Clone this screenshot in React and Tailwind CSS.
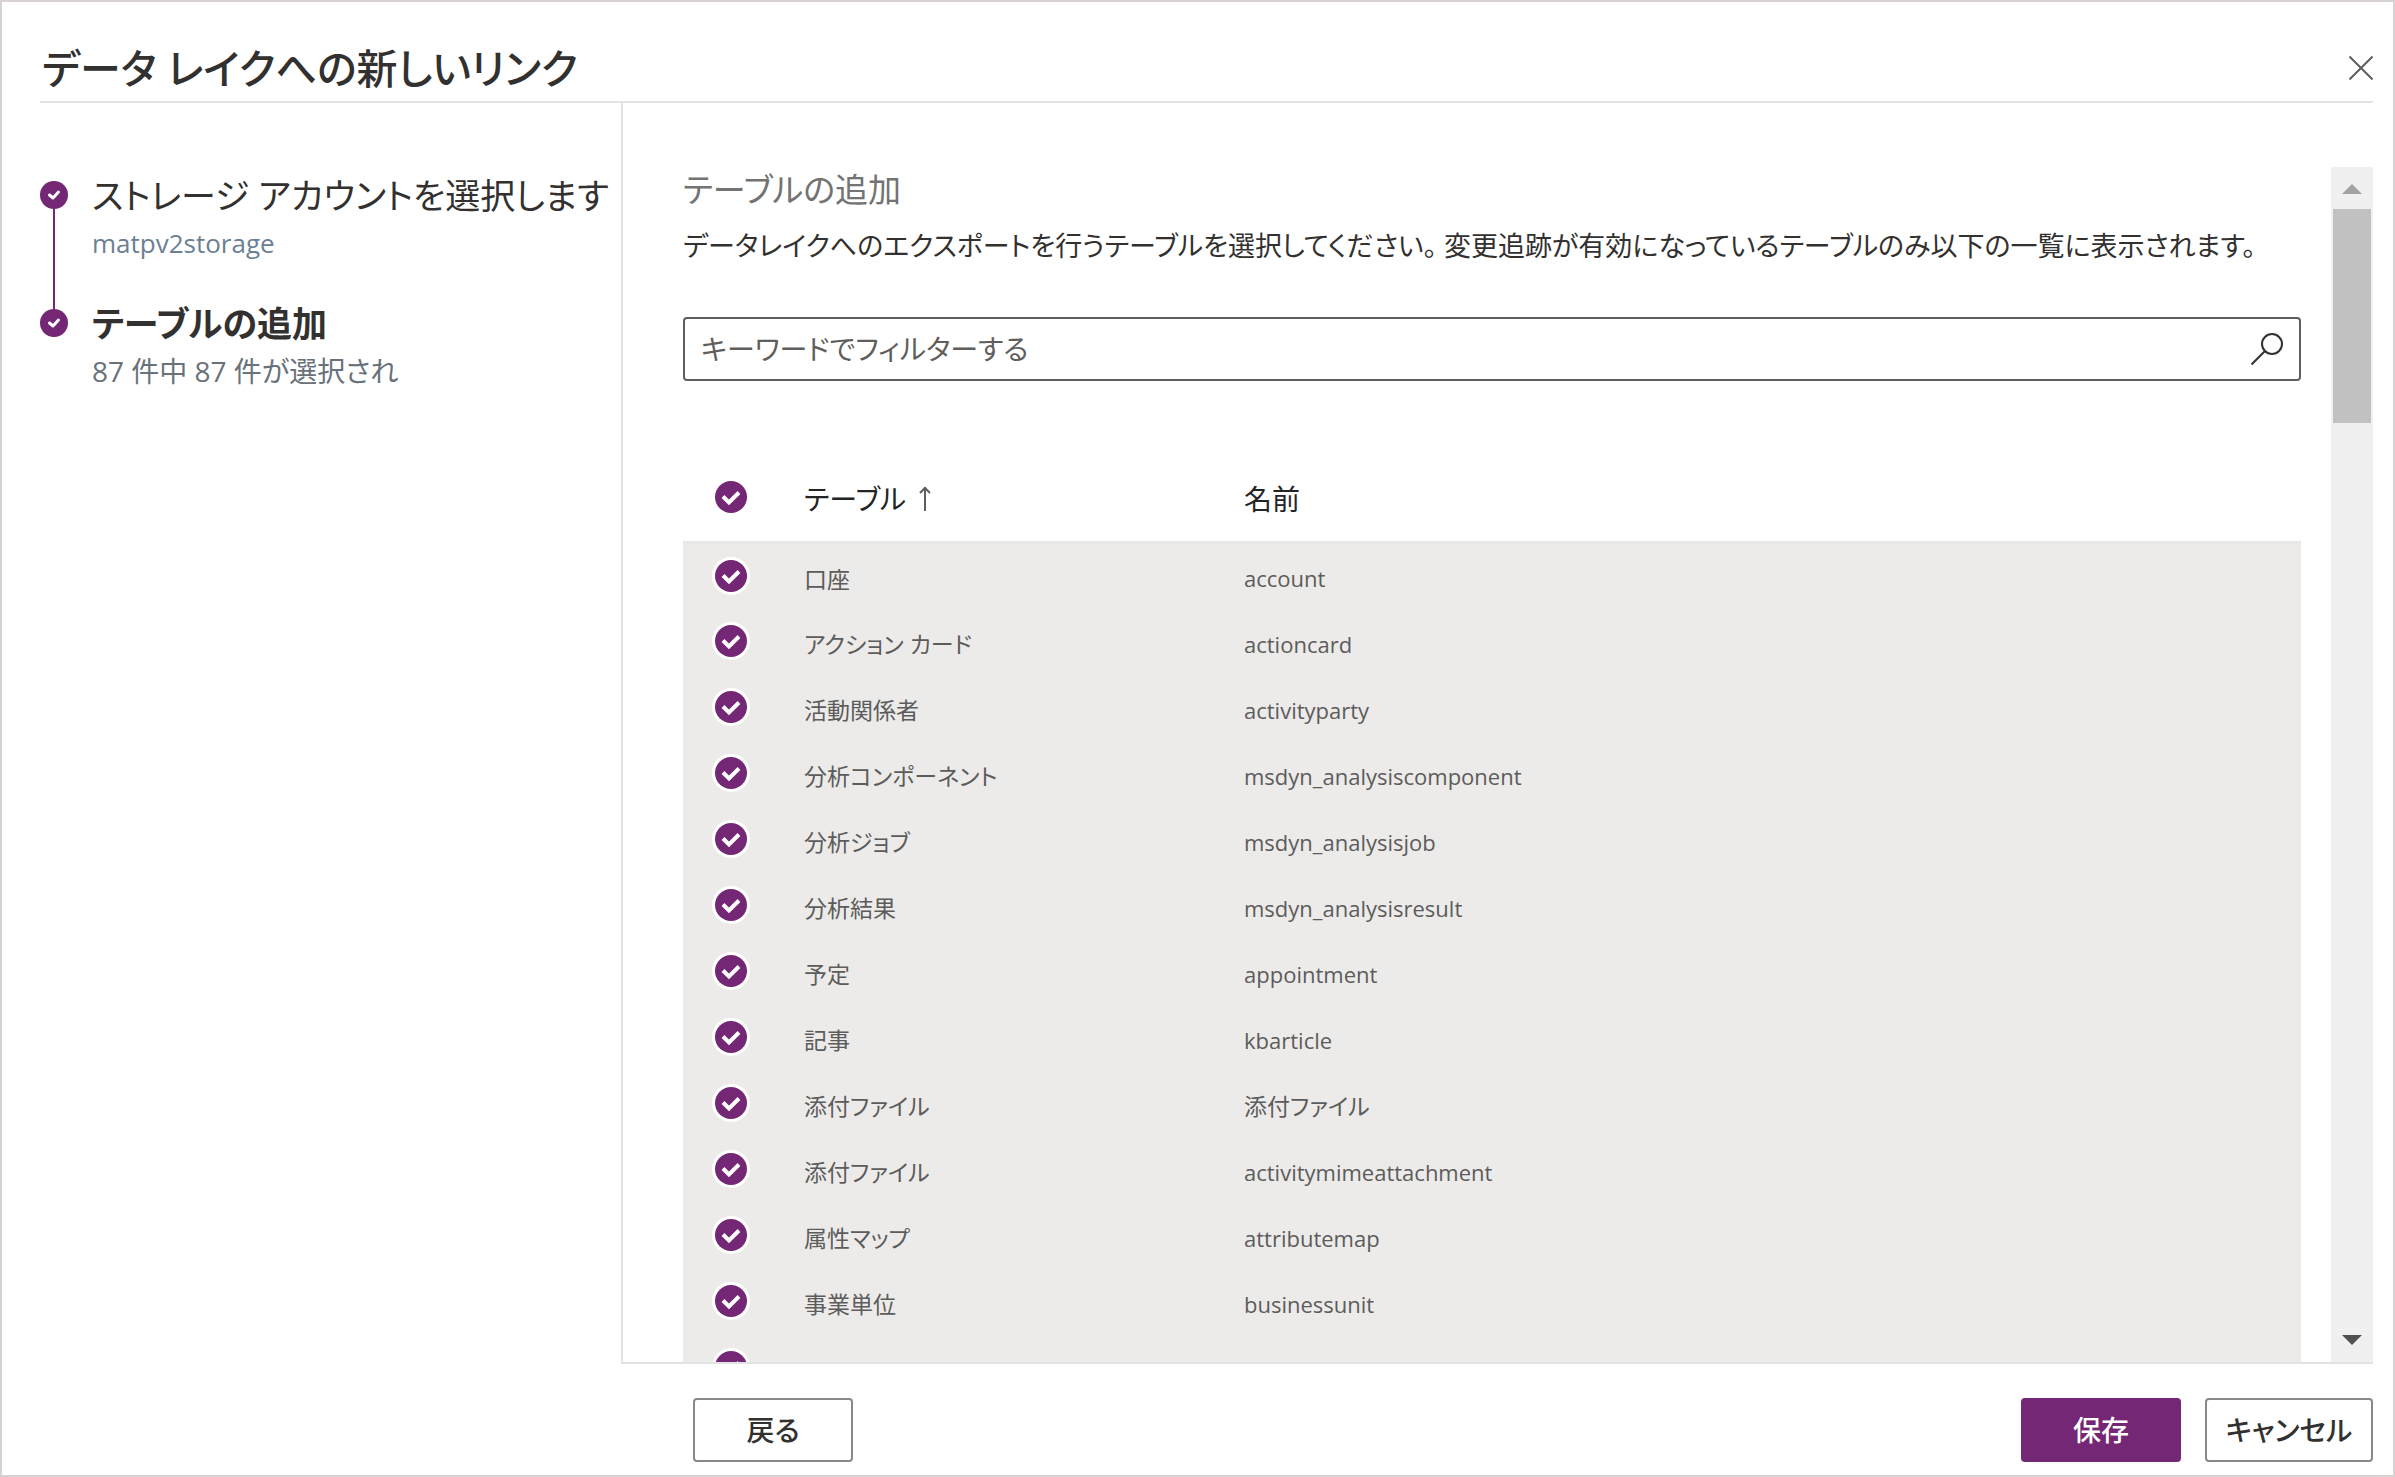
const rows = [
  ['口座', 'account'],
  ['アクション カード', 'actioncard'],
  ['活動関係者', 'activityparty'],
  ['分析コンポーネント', 'msdyn_analysiscomponent'],
  ['分析ジョブ', 'msdyn_analysisjob'],
  ['分析結果', 'msdyn_analysisresult'],
  ['予定', 'appointment'],
  ['記事', 'kbarticle'],
  ['添付ファイル', '添付ファイル'],
  ['添付ファイル', 'activitymimeattachment'],
  ['属性マップ', 'attributemap'],
  ['事業単位', 'businessunit'],
  ['', ''],
];

const isLatin = (text) => /^[\w ]*$/.test(text);

function RoundCheck({ labelledBy, ring }) {
  return (
    <span className="relative block size-8">
      <input
        type="checkbox"
        defaultChecked
        aria-labelledby={labelledBy}
        className={`block size-8 appearance-none rounded-full bg-[#742774] ${ring ? 'ring-[3px] ring-white' : ''}`}
      />
      <svg viewBox="0 0 32 32" className="pointer-events-none absolute inset-0 size-8" fill="none" stroke="#fff" strokeWidth="4" aria-hidden="true">
        <path d="M8 15.5 L14 21.5 L24 11.5" />
      </svg>
    </span>
  );
}

function Step({ title, detail, active, last }) {
  return (
    <li className="flex gap-6">
      <div className="flex w-7 flex-col items-center pt-3">
        <svg viewBox="0 0 28 28" className="size-7 shrink-0" aria-hidden="true">
          <circle cx="14" cy="14" r="14" fill="#742774" />
          <path d="M9.5 14 L13 17 L18.5 11" fill="none" stroke="#fff" strokeWidth="3" strokeLinecap="round" strokeLinejoin="round" />
        </svg>
        {!last && <div className="-mb-3 w-0.5 grow bg-[#742774]" />}
      </div>
      <div className={last ? '' : 'pb-[34px]'}>
        <div className={`text-[35px] leading-[54px] whitespace-nowrap text-[#323130] ${active ? 'font-bold' : ''}`}>{title}</div>
        <div className={`leading-10 ${isLatin(detail) ? 'text-[26px] text-[#6c8094]' : 'text-[28px] text-[#69727a]'}`}>{detail}</div>
      </div>
    </li>
  );
}

export default function App() {
  return (
    <main
      lang="ja"
      className="flex h-screen flex-col overflow-hidden border-2 border-[#d8d2d2] bg-white pr-5 pl-[38px] text-[#323130] font-['Open_Sans','Noto_Sans_CJK_JP',sans-serif] [font-feature-settings:'palt']"
    >
      <header className="flex h-[101px] shrink-0 items-center justify-between border-b-2 border-[#e3e3e3] pt-8">
        <h1 className="pl-0.5 text-[41px] leading-[60px] font-medium">データ レイクへの新しいリンク</h1>
        <button type="button" aria-label="閉じる" className="block">
          <svg viewBox="0 0 24 24" className="size-6" stroke="#605e5c" strokeWidth="2" aria-hidden="true">
            <path d="M0.5 0.5 L23.5 23.5 M23.5 0.5 L0.5 23.5" />
          </svg>
        </button>
      </header>

      <div className="flex min-h-0 grow">
        <nav className="w-[581px] shrink-0 pt-[66px]">
          <ol>
            <Step title="ストレージ アカウントを選択します" detail="matpv2storage" />
            <Step title="テーブルの追加" detail="87 件中 87 件が選択され" active last />
          </ol>
        </nav>

        <section className="flex min-w-0 grow border-b-2 border-l-2 border-[#e3e3e3] pt-16 pl-[60px]">
          <div className="min-w-0 grow overflow-hidden">
            <h2 className="text-[33px] leading-[46px] text-[#737373]">テーブルの追加</h2>
            <p className="pt-3 text-[27px] leading-[42px]">
              データレイクへのエクスポートを行うテーブルを選択してください。 変更追跡が有効になっているテーブルのみ以下の一覧に表示されます。
            </p>
            <label className="mt-[50px] flex h-16 items-center rounded border-2 border-[#605e5c] px-4">
              <input
                type="text"
                aria-label="キーワードでフィルターする"
                placeholder="キーワードでフィルターする"
                className="min-w-0 grow text-[28px] outline-none placeholder:text-[#605e5c]"
              />
              <svg viewBox="0 0 32 32" className="size-8" fill="none" stroke="#323130" strokeWidth="2" aria-hidden="true">
                <circle cx="21" cy="11" r="10" />
                <path d="M14 18 L0.5 31.5" />
              </svg>
            </label>
            <table className="mt-[73px] w-full table-fixed border-collapse text-left">
              <colgroup>
                <col className="w-[121px]" />
                <col className="w-[440px]" />
                <col />
              </colgroup>
              <thead>
                <tr className="h-[88px] text-[28px] text-[#242424]">
                  <th className="pl-8">
                    <RoundCheck labelledBy="col-table" />
                  </th>
                  <th id="col-table" className="pt-1 font-normal">
                    <span className="flex items-center gap-3">
                      テーブル
                      <svg viewBox="0 0 14 26" className="h-[26px] w-3.5" fill="none" stroke="#605e5c" strokeWidth="2" aria-hidden="true">
                        <path d="M7 25 V1 M2 7 L7 2 L12 7" />
                      </svg>
                    </span>
                  </th>
                  <th className="pt-1 font-normal">名前</th>
                </tr>
              </thead>
              <tbody className="border-t-3 border-[#e9e8e8] bg-[#ecebe9] text-[#5c5c5c]">
                {rows.map(([label, name], i) => (
                  <tr key={i} className="h-[66px]">
                    <td className="pl-8">
                      <RoundCheck labelledBy={`row-${i}`} ring />
                    </td>
                    <td id={`row-${i}`} className="pt-1.5 text-[23px]">{label}</td>
                    <td className={`pt-1.5 ${isLatin(name) ? 'text-[22px]' : 'text-[23px]'}`}>{name}</td>
                  </tr>
                ))}
              </tbody>
            </table>
          </div>

          <div className="ml-[30px] flex w-[42px] shrink-0 flex-col items-center bg-[#f0f0f0]" aria-hidden="true">
            <svg viewBox="0 0 42 42" className="h-[42px] w-[42px] shrink-0">
              <path d="M11 27 L21 17 L31 27 Z" fill="#a3a3a3" />
            </svg>
            <div className="h-[214px] w-[38px] bg-[#c1c1c1]" />
            <svg viewBox="0 0 42 42" className="mt-auto h-[42px] w-[42px] shrink-0">
              <path d="M11 15 L21 25 L31 15 Z" fill="#505050" />
            </svg>
          </div>
        </section>
      </div>

      <footer className="flex shrink-0 gap-6 pt-[34px] pb-[13px] pl-[653px] text-[28px] font-medium">
        <button type="button" className="mr-auto h-16 w-40 rounded border-2 border-[#8a8886]">戻る</button>
        <button type="button" className="h-16 w-40 rounded bg-[#742774] text-white">保存</button>
        <button type="button" className="h-16 w-[168px] rounded border-2 border-[#8a8886]">キャンセル</button>
      </footer>
    </main>
  );
}
